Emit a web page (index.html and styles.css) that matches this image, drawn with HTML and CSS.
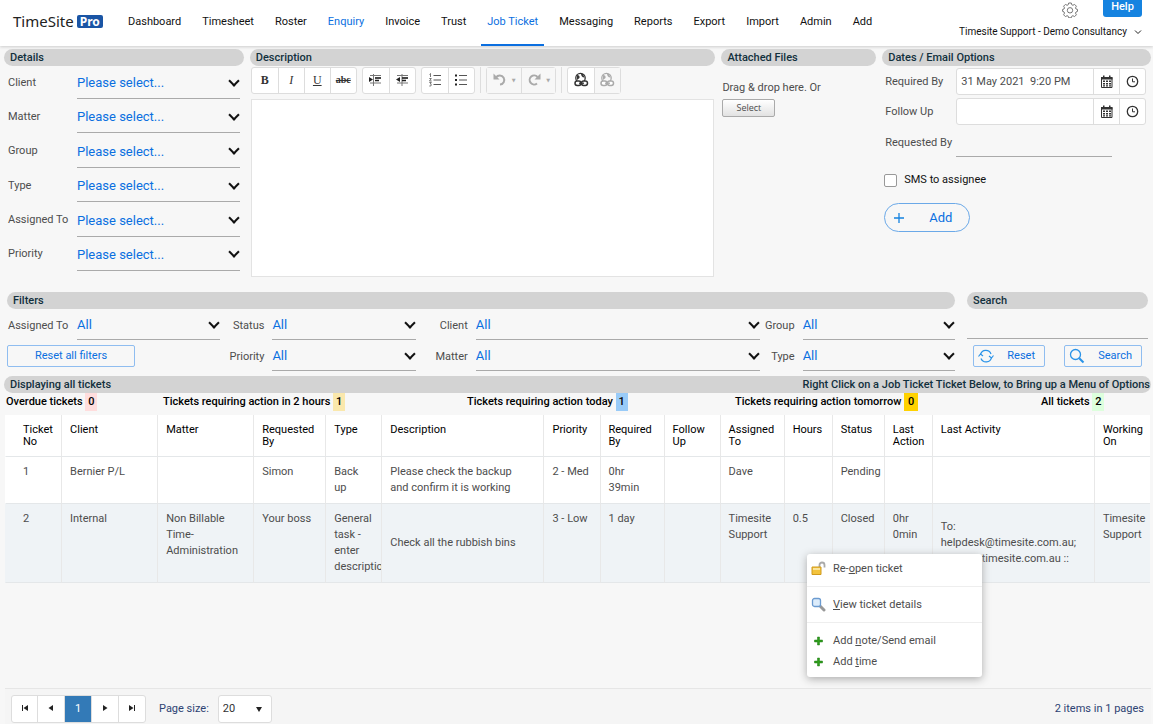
FILE: index.html
```html
<!DOCTYPE html>
<html lang="en">

<head>
    <meta charset="UTF-8">
    <meta name="viewport" content="width=device-width, initial-scale=1.0">
    <link rel="stylesheet" href="styles.css">
    <title>Job Ticket</title>
</head>

<body>

    <svg class="sprite" aria-hidden="true">
        <symbol id="calendar" viewBox="0 0 14 14">
            <path d="M1.500 2.500h10.500v10h-10.500z" fill="#fff" stroke="#333" />
            <path d="M1 2h11.500v2.500H1zM3 .5h1.500V3H3zM9 .5h1.500V3H9z" fill="#333" />
            <path d="M3 5.500h2v1.500H3zM6 5.500h2v1.500H6zM9 5.500h2v1.500H9zM3 8h2v1.500H3zM6 8h2v1.500H6zM9 8h2v1.500H9zM3 10.300h2v1.200H3zM6 10.300h2v1.200H6zM9 10.300h2v1.200H9z" fill="#333" />
        </symbol>
        <symbol id="clock" viewBox="0 0 14 14">
            <circle cx="6.500" cy="6.500" r="5.200" fill="none" stroke="#333" stroke-width="1.300" />
            <path d="M6.500 3.500v3.300H9" fill="none" stroke="#333" />
        </symbol>
        <symbol id="plus" viewBox="0 0 10 10">
            <path d="M4 1h2v3h3v2H6v3H4V6H1V4h3z" fill="#2f9e1c" stroke="#1d7a10" stroke-width=".5" />
        </symbol>
        <symbol id="chain" viewBox="0 0 16 16">
            <circle cx="7.500" cy="6" r="4.700" fill="none" stroke="currentColor" stroke-width="1.300" />
            <path d="M4 3c2 0 3 1 2.500 3L4 8zM8 1.500c0 2 1 4 3.500 4L10 2z" fill="currentColor" />
            <rect x="2" y="9" width="6" height="4.500" rx="2.200" fill="#fff" stroke="currentColor" stroke-width="1.500" />
            <rect x="8.500" y="9" width="6" height="4.500" rx="2.200" fill="#fff" stroke="currentColor" stroke-width="1.500" />
            <path d="M6 11.200h5" stroke="currentColor" stroke-width="1.300" />
        </symbol>
        <symbol id="undo" viewBox="0 0 16 16">
            <path d="M4 5.500A4.500 4.500 0 1 1 8 12.500" fill="none" stroke="currentColor" stroke-width="2" />
            <path d="M1.500 1.500v6h6z" fill="currentColor" />
        </symbol>
        <symbol id="redo" viewBox="0 0 16 16">
            <path d="M11.500 5A4.500 4.500 0 1 0 11 11.500" fill="none" stroke="currentColor" stroke-width="2" />
            <path d="M14.500 1.500v6h-6z" fill="currentColor" />
        </symbol>
    </svg>

    <header class="header">
        <a class="logo" href="#">TimeSite<span class="logo-pro">Pro</span></a>
        <nav class="nav">
            <a class="nav-link" href="#">Dashboard</a>
            <a class="nav-link" href="#">Timesheet</a>
            <a class="nav-link" href="#">Roster</a>
            <a class="nav-link blue" href="#">Enquiry</a>
            <a class="nav-link" href="#">Invoice</a>
            <a class="nav-link" href="#">Trust</a>
            <a class="nav-link blue active" href="#">Job Ticket</a>
            <a class="nav-link" href="#">Messaging</a>
            <a class="nav-link" href="#">Reports</a>
            <a class="nav-link" href="#">Export</a>
            <a class="nav-link" href="#">Import</a>
            <a class="nav-link" href="#">Admin</a>
            <a class="nav-link" href="#">Add</a>
        </nav>
        <div class="account">
            <div class="account-top">
                <button class="gear" aria-label="Settings">
                    <svg width="16" height="16" viewBox="0 0 16 16" fill="none" stroke="#777">
                        <path d="M6.700 1h2.600l.5 1.800 1.100.5 1.700-.9 1.800 1.800-.9 1.700.5 1.100 1.500.4v2l-1.500.6-.5 1.100.9 1.700-1.800 1.800-1.700-.9-1.100.5-.5 1.600H6.700l-.5-1.600-1.100-.5-1.700.9-1.800-1.800.9-1.700L2 9.900.6 9.400v-2L2 7l.5-1.100-.9-1.700 1.800-1.800 1.700.9 1.100-.5z" />
                        <circle cx="8" cy="8.300" r="2.700" />
                    </svg>
                </button>
                <button class="help">Help</button>
            </div>
            <button class="user">Timesite Support - Demo Consultancy
                <svg width="8" height="6" viewBox="0 0 8 6"><path d="M1 1.500l3 3 3-3" fill="none" stroke="#222" /></svg>
            </button>
        </div>
    </header>

    <main class="main">

        <div class="ticket-form">
            <section class="panel">
                <h2 class="bar">Details</h2>
                <div class="details">
                    <label class="detail" for="client">Client
                        <span class="drop"><select id="client"><option>Please select...</option></select></span></label>
                    <label class="detail" for="matter">Matter
                        <span class="drop"><select id="matter"><option>Please select...</option></select></span></label>
                    <label class="detail" for="group">Group
                        <span class="drop"><select id="group"><option>Please select...</option></select></span></label>
                    <label class="detail" for="type">Type
                        <span class="drop"><select id="type"><option>Please select...</option></select></span></label>
                    <label class="detail" for="assigned">Assigned To
                        <span class="drop"><select id="assigned"><option>Please select...</option></select></span></label>
                    <label class="detail" for="priority">Priority
                        <span class="drop"><select id="priority"><option>Please select...</option></select></span></label>
                </div>
            </section>

            <section class="panel">
                <h2 class="bar">Description</h2>
                <div class="toolbar">
                    <div class="tool-group">
                        <button class="tool"><b>B</b></button>
                        <button class="tool"><i>I</i></button>
                        <button class="tool"><u>U</u></button>
                        <button class="tool strike"><s>abc</s></button>
                    </div>
                    <div class="tool-group">
                        <button class="tool" aria-label="Indent">
                            <svg width="13" height="12" viewBox="0 0 13 12"><path d="M1 1.500h11M6 4h6M6 6.500h4M1 9h11M4.500 0v12" stroke="#777" fill="none" /><path d="M0 3l4 2.500L0 8z" fill="#222" /><path d="M6 4h6M6 6.500h4" stroke="#222" stroke-width="1.300" /></svg>
                        </button>
                        <button class="tool" aria-label="Outdent">
                            <svg width="13" height="12" viewBox="0 0 13 12"><path d="M1 1.500h11M6 4h6M6 6.500h4M1 9h11M6 0v12" stroke="#777" fill="none" /><path d="M4 3L0 5.500 4 8z" fill="#222" /><path d="M6 4h6M6 6.500h4" stroke="#222" stroke-width="1.300" /></svg>
                        </button>
                    </div>
                    <div class="tool-group">
                        <button class="tool" aria-label="Numbered list">
                            <svg width="12" height="14" viewBox="0 0 12 14" fill="none" stroke="#555"><path d="M4.500 2.500H12M4.500 7H12M4.500 11.500H12" /><path d="M.5 1.500l1-1v3.500M.3 5.500h2L.5 8h2.200M.3 9.500h2l-1 1.500 1 .5-.5 1.500H.3" stroke-width=".8" /></svg>
                        </button>
                        <button class="tool" aria-label="Bullet list">
                            <svg width="12" height="12" viewBox="0 0 12 12"><path d="M4 1.500h8M4 6h8M4 10.500h8" stroke="#555" /><path d="M0 .5h2v2H0zM0 5h2v2H0zM0 9.500h2v2H0z" fill="#222" /></svg>
                        </button>
                    </div>
                    <span class="tool-divider"></span>
                    <div class="tool-group off">
                        <button class="tool wide" aria-label="Undo" disabled><svg width="16" height="16"><use href="#undo" /></svg><span class="caret">▼</span></button>
                        <button class="tool wide" aria-label="Redo" disabled><svg width="16" height="16"><use href="#redo" /></svg><span class="caret">▼</span></button>
                    </div>
                    <span class="tool-divider"></span>
                    <div class="tool-group">
                        <button class="tool" aria-label="Insert link"><svg width="16" height="16"><use href="#chain" /></svg></button>
                        <button class="tool off" aria-label="Remove link" disabled><svg width="16" height="16"><use href="#chain" /></svg></button>
                    </div>
                </div>
                <textarea class="editor" aria-label="Description"></textarea>
            </section>

            <section class="panel">
                <h2 class="bar">Attached Files</h2>
                <div class="files">
                    <span>Drag &amp; drop here. Or</span>
                    <button class="select-file">Select</button>
                </div>
            </section>

            <section class="panel">
                <h2 class="bar">Dates / Email Options</h2>
                <div class="dates">
                    <label for="required-by">Required By</label>
                    <div class="date-field">
                        <input id="required-by" type="text" value="31 May 2021  9:20 PM">
                        <button aria-label="Pick date"><svg width="14" height="14"><use href="#calendar" /></svg></button>
                        <button aria-label="Pick time"><svg width="14" height="14"><use href="#clock" /></svg></button>
                    </div>
                    <label for="follow-up">Follow Up</label>
                    <div class="date-field">
                        <input id="follow-up" type="text">
                        <button aria-label="Pick date"><svg width="14" height="14"><use href="#calendar" /></svg></button>
                        <button aria-label="Pick time"><svg width="14" height="14"><use href="#clock" /></svg></button>
                    </div>
                    <label for="requested-by">Requested By</label>
                    <input id="requested-by" class="line-input requested" type="text">
                </div>
                <label class="sms"><input type="checkbox">SMS to assignee</label>
                <button class="add-button">
                    <svg width="12" height="12" viewBox="0 0 12 12"><path d="M6 1v10M1 6h10" stroke="#1583e0" stroke-width="1.300" /></svg>
                    Add
                </button>
            </section>
        </div>

        <div class="filter-row">
            <section>
                <h2 class="bar">Filters</h2>
                <div class="filters">
                    <label class="first" for="f-assigned">Assigned To</label>
                    <span class="drop"><select id="f-assigned"><option>All</option></select></span>
                    <label for="f-status">Status</label>
                    <span class="drop"><select id="f-status"><option>All</option></select></span>
                    <label for="f-client">Client</label>
                    <span class="drop"><select id="f-client"><option>All</option></select></span>
                    <label for="f-group">Group</label>
                    <span class="drop"><select id="f-group"><option>All</option></select></span>
                    <div class="reset-cell"><button class="box-button reset-all">Reset all filters</button></div>
                    <label for="f-priority">Priority</label>
                    <span class="drop"><select id="f-priority"><option>All</option></select></span>
                    <label for="f-matter">Matter</label>
                    <span class="drop"><select id="f-matter"><option>All</option></select></span>
                    <label for="f-type">Type</label>
                    <span class="drop"><select id="f-type"><option>All</option></select></span>
                </div>
            </section>
            <section>
                <h2 class="bar">Search</h2>
                <div class="search">
                    <input class="line-input" type="text" aria-label="Search">
                    <div class="search-buttons">
                        <button class="box-button">
                            <svg width="16" height="14" viewBox="0 0 16 14" fill="none" stroke="#2a93e8" stroke-width="1.200"><path d="M2.500 5.500A5.500 5.500 0 0 1 13 5M13.500 8.500A5.500 5.500 0 0 1 3 9.500" /><path d="M.5 7.500l2-2.500 2.500 2M11 7l2.500 2 2-2.500" /></svg>
                            Reset
                        </button>
                        <button class="box-button">
                            <svg width="16" height="16" viewBox="0 0 16 16" fill="none" stroke="#2a93e8"><circle cx="6.500" cy="6.500" r="5" stroke-width="1.300" /><path d="M10.200 10.200l4.300 4.300" stroke-width="2" /></svg>
                            Search
                        </button>
                    </div>
                </div>
            </section>
        </div>

        <div class="bar status-bar">
            <span>Displaying all tickets</span>
            <span>Right Click on a Job Ticket Ticket Below, to Bring up a Menu of Options</span>
        </div>

        <div class="counts">
            <div>Overdue tickets <span class="count pink">0</span></div>
            <div>Tickets requiring action in 2 hours <span class="count yellow">1</span></div>
            <div>Tickets requiring action today <span class="count sky">1</span></div>
            <div>Tickets requiring action tomorrow <span class="count gold">0</span></div>
            <div>All tickets <span class="count green">2</span></div>
        </div>

        <div class="tickets-wrap">
            <table class="tickets">
                <colgroup>
                    <col class="w56"><col class="w96"><col class="w96"><col class="w72"><col class="w56">
                    <col class="w162"><col class="w56"><col class="w64"><col class="w56"><col class="w64">
                    <col class="w48"><col class="w52"><col class="w48"><col class="w162"><col class="w56">
                </colgroup>
                <thead>
                    <tr>
                        <th>Ticket No</th>
                        <th>Client</th>
                        <th>Matter</th>
                        <th>Requested By</th>
                        <th>Type</th>
                        <th>Description</th>
                        <th>Priority</th>
                        <th>Required By</th>
                        <th>Follow Up</th>
                        <th>Assigned To</th>
                        <th>Hours</th>
                        <th>Status</th>
                        <th>Last Action</th>
                        <th>Last Activity</th>
                        <th>Working On</th>
                    </tr>
                </thead>
                <tbody>
                    <tr>
                        <td>1</td>
                        <td>Bernier P/L</td>
                        <td></td>
                        <td>Simon</td>
                        <td>Back up</td>
                        <td>Please check the backup and confirm it is working</td>
                        <td class="nowrap">2 - Med</td>
                        <td>0hr 39min</td>
                        <td></td>
                        <td>Dave</td>
                        <td></td>
                        <td>Pending</td>
                        <td></td>
                        <td></td>
                        <td></td>
                    </tr>
                    <tr class="alt">
                        <td>2</td>
                        <td>Internal</td>
                        <td>Non Billable Time- Administration</td>
                        <td>Your boss</td>
                        <td>General task - enter description</td>
                        <td class="middle">Check all the rubbish bins</td>
                        <td class="nowrap">3 - Low</td>
                        <td>1 day</td>
                        <td></td>
                        <td>Timesite Support</td>
                        <td>0.5</td>
                        <td>Closed</td>
                        <td>0hr 0min</td>
                        <td class="middle">To: helpdesk@timesite.com.au; <span class="mail-end">timesite.com.au ::</span></td>
                        <td>Timesite Support</td>
                    </tr>
                </tbody>
            </table>

            <div class="menu" role="menu">
                <button class="menu-item" role="menuitem">
                    <svg width="15" height="15" viewBox="0 0 15 15"><path d="M8.500 6V4a2.500 2.500 0 0 1 5 0v2.500" fill="none" stroke="#aaa" stroke-width="1.800" /><path d="M1 6h9v7.500H1z" fill="#f3c33c" stroke="#d09a1c" /><path d="M2 7h7v2H2z" fill="#fbe49a" /></svg>
                    <span>Re-<u>o</u>pen ticket</span>
                </button>
                <button class="menu-item ruled" role="menuitem">
                    <svg width="15" height="15" viewBox="0 0 15 15"><path d="M9 9l4 4" stroke="#999" stroke-width="3" stroke-linecap="round" /><rect x="1.500" y="1.500" width="8" height="8" rx="2" fill="#dcecfb" stroke="#6b9bd0" stroke-width="1.300" /></svg>
                    <span><u>V</u>iew ticket details</span>
                </button>
                <button class="menu-item" role="menuitem">
                    <svg width="15" height="10"><use href="#plus" /></svg>
                    <span>Add <u>n</u>ote/Send email</span>
                </button>
                <button class="menu-item" role="menuitem">
                    <svg width="15" height="10"><use href="#plus" /></svg>
                    <span>Add <u>t</u>ime</span>
                </button>
            </div>
        </div>
    </main>

    <footer class="pager">
        <div class="pages">
            <button aria-label="First page"><svg width="8" height="8" viewBox="0 0 8 8"><path d="M1 1h1v6H1zM7 1v6L2.500 4z" fill="#222" /></svg></button>
            <button aria-label="Previous page"><svg width="8" height="8" viewBox="0 0 8 8"><path d="M6 1v6L1.500 4z" fill="#222" /></svg></button>
            <button class="current">1</button>
            <button aria-label="Next page"><svg width="8" height="8" viewBox="0 0 8 8"><path d="M2 1v6l4.500-3z" fill="#222" /></svg></button>
            <button aria-label="Last page"><svg width="8" height="8" viewBox="0 0 8 8"><path d="M6 1h1v6H6zM1 1v6l4.500-3z" fill="#222" /></svg></button>
        </div>
        <label for="page-size">Page size:</label>
        <span class="page-size"><select id="page-size"><option>20</option></select></span>
        <span class="pager-info">2 items in 1 pages</span>
    </footer>

</body>

</html>
```

FILE: styles.css
```css
*,
*::after {
    box-sizing: border-box;
}

body {
    margin: 0;
    min-height: 100vh;
    display: flex;
    flex-direction: column;
    background-color: #f7f7f7;
    font-family: Roboto, "Liberation Sans", sans-serif;
    font-size: 11px;
    line-height: 16px;
    color: #4d4d4d;
}

button,
input,
select,
textarea {
    font: inherit;
    color: inherit;
    margin: 0;
    padding: 0;
    border: none;
    border-radius: 0;
    background: none;
}

button {
    cursor: pointer;
}

a {
    color: inherit;
    text-decoration: none;
}

.sprite {
    display: none;
}

/* header */

.header {
    display: flex;
    height: 46px;
    background-color: #fff;
    box-shadow: 0 1px 3px #ccc;
}

.logo {
    display: flex;
    align-items: center;
    gap: 3px;
    width: 122px;
    padding-left: 13px;
    padding-bottom: 4px;
    font-family: "Noto Sans", sans-serif;
    font-size: 15px;
    color: #222;
}

.logo-pro {
    padding: 0 3px;
    border-radius: 2px;
    background-color: #1a55a5;
    color: #fff;
    font-size: 12px;
    font-weight: bold;
    line-height: 13px;
}

.nav {
    display: flex;
    gap: 9px;
}

.nav-link {
    padding: 14px 6px 0;
    border-bottom: 2px solid transparent;
    color: #111;
}

.blue {
    color: #0b6fe0;
}

.active {
    border-bottom-color: #0b6fe0;
}

.account {
    margin-left: auto;
    padding-right: 11px;
    display: flex;
    flex-direction: column;
    align-items: flex-end;
}

.account-top {
    display: flex;
    gap: 25px;
    align-items: flex-start;
}

.gear {
    height: 18px;
    padding-top: 1px;
}

.gear svg,
.tool svg,
.date-field svg,
.menu-item svg {
    display: block;
}

.help {
    width: 39px;
    height: 17px;
    padding-bottom: 3px;
    border-radius: 0 0 3px 3px;
    background-color: #1583e0;
    color: #fff;
    font-size: 11px;
    font-weight: 500;
    line-height: 14px;
}

.user {
    display: flex;
    align-items: center;
    gap: 7px;
    margin-top: 6px;
    font-size: 10px;
    color: #111;
}

.main {
    padding: 3px 2px 0 4px;
}

.bar {
    margin: 0;
    padding: 0 6px;
    height: 17px;
    border-radius: 9px;
    background-color: #d3d3d3;
    font-size: 11px;
    font-weight: 500;
    line-height: 17px;
    color: #12303d;
}

/* new ticket form */

.ticket-form {
    display: grid;
    grid-template-columns: 240fr 466fr 155fr 269fr;
    gap: 6px;
}

.panel {
    display: flex;
    flex-direction: column;
    min-width: 0;
}

.details {
    flex: 1;
    display: flex;
    flex-direction: column;
    justify-content: space-between;
    padding: 0 4px 6px 4px;
}

.detail {
    display: grid;
    grid-template-columns: 69px 1fr;
    align-items: center;
    line-height: 18px;
}

.drop {
    display: grid;
    height: 33px;
    align-items: center;
    border-bottom: 1px solid #aaa;
    min-width: 0;
}

.drop select {
    grid-area: 1 / 1;
    width: 100%;
    height: 100%;
    padding-top: 2px;
    appearance: none;
    font-size: 13px;
    color: #0b6fe0;
}

.drop::after {
    content: "";
    grid-area: 1 / 1;
    justify-self: end;
    width: 8px;
    height: 8px;
    margin: 0 2px 3px 0;
    border: solid #111;
    border-width: 0 2px 2px 0;
    transform: rotate(45deg);
    pointer-events: none;
}

.toolbar {
    display: flex;
    align-items: center;
    gap: 5px;
    padding: 0 1px;
    height: 28px;
}

.tool-group {
    display: flex;
    border: 1px solid #ddd;
    border-radius: 3px;
    background-color: #fff;
}

.tool {
    display: flex;
    align-items: center;
    justify-content: center;
    width: 26px;
    height: 25px;
    font-family: "Liberation Serif", serif;
    font-size: 12px;
    color: #333;
}

.tool + .tool {
    border-left: 1px solid #ddd;
}

.tool.strike {
    font-size: 10px;
    font-weight: bold;
}

.tool.wide {
    width: 34px;
    gap: 4px;
}

.off,
.off .tool {
    background-color: #f7f7f7;
    color: #aaa;
}

.caret {
    font-family: "DejaVu Sans", sans-serif;
    font-size: 5px;
}

.tool-divider {
    width: 1px;
    height: 26px;
    background-color: #ddd;
}

.editor {
    height: 178px;
    margin: 5px 1px 0;
    padding: 8px;
    border: 1px solid #e3e3e3;
    background-color: #fff;
    resize: none;
}

.files {
    display: flex;
    flex-direction: column;
    align-items: flex-start;
    gap: 3px;
    padding: 14px 1px;
}

.select-file {
    width: 53px;
    height: 18px;
    border: 1px solid #aaa;
    border-radius: 2px;
    background-image: linear-gradient(#fff, #e2e2e2);
    font-family: "Open Sans", sans-serif;
    font-size: 9px;
    line-height: 14px;
}

.dates {
    display: grid;
    grid-template-columns: 71px minmax(0, 1fr);
    align-items: center;
    row-gap: 3px;
    padding: 2px 5px 0 3px;
}

.date-field {
    display: flex;
    height: 27px;
    border: 1px solid #ddd;
    border-radius: 3px;
    background-color: #fff;
}

.date-field input {
    flex: 1;
    min-width: 0;
    padding-left: 4px;
}

.date-field button {
    display: grid;
    place-items: center;
    width: 26px;
    border-left: 1px solid #ddd;
}

.line-input {
    display: block;
    width: 100%;
    height: 30px;
    border-bottom: 1px solid #aaa;
}

.requested {
    width: 156px;
    height: 29px;
}

.sms {
    display: flex;
    align-items: center;
    gap: 7px;
    padding: 15px 2px 14px;
    color: #111;
}

.sms input {
    appearance: none;
    width: 13px;
    height: 13px;
    border: 1px solid #999;
    border-radius: 2px;
    background-color: #fff;
}

.add-button {
    display: flex;
    align-items: center;
    gap: 24px;
    width: 86px;
    height: 29px;
    margin: 1px 2px;
    padding-left: 8px;
    border: 1px solid #6ba9e8;
    border-radius: 15px;
    font-size: 13px;
    color: #0b6fe0;
}

/* filters */

.filter-row {
    display: grid;
    grid-template-columns: 948fr 181fr;
    gap: 12px;
    margin-top: 15px;
    padding: 0 3px;
}

.filters {
    display: grid;
    grid-template-columns: 70px 144fr 52px 144fr 60px 285fr 43px 153fr;
    grid-auto-rows: 31px;
    align-items: center;
}

.filters label {
    padding: 2px 8px 0 0;
    text-align: right;
    white-space: nowrap;
}

.filters .first {
    padding: 2px 0 0 1px;
    text-align: left;
}

.filters .drop {
    height: 31px;
}

.reset-cell {
    grid-column: span 2;
}

.box-button {
    display: flex;
    align-items: center;
    justify-content: space-between;
    height: 22px;
    padding: 0 9px 0 4px;
    border: 1px solid #8fbdf0;
    border-radius: 2px;
    color: #0b6fe0;
}

.reset-all {
    width: 128px;
    justify-content: center;
    padding: 0;
}

.search-buttons {
    display: flex;
    justify-content: space-between;
    padding: 6px 6px 0;
}

.search-buttons .box-button {
    width: 78px;
}

.search-buttons .box-button:first-child {
    width: 72px;
}

.status-bar {
    display: flex;
    justify-content: space-between;
    margin-top: 5px;
    padding-right: 1px;
}

.counts {
    display: grid;
    grid-template-columns: 157fr 304fr 268fr 306fr 110fr;
    padding-left: 2px;
    font-weight: 500;
    line-height: 18px;
    color: #000;
}

.count {
    display: inline-block;
    width: 12px;
    text-align: center;
}

.pink {
    background-color: #fdd;
}

.yellow {
    background-color: #fae8ac;
}

.sky {
    background-color: #99cbf8;
}

.gold {
    width: 14px;
    background-color: #ffd200;
}

.green {
    background-color: #dfd;
}

/* ticket table */

.tickets-wrap {
    position: relative;
    margin: 4px 1px 0 1px;
}

.tickets {
    width: 100%;
    table-layout: fixed;
    border-collapse: separate;
    border-spacing: 0;
    background-color: #fff;
}

.w48 { width: 48px; }
.w52 { width: 52px; }
.w56 { width: 56px; }
.w64 { width: 64px; }
.w72 { width: 72px; }
.w96 { width: 96px; }
.w162 { width: 162px; }

.tickets th,
.tickets td {
    padding: 7px 11px 7px 8px;
    border-left: 1px solid #e8e8e8;
    border-bottom: 1px solid #e4e7e9;
    text-align: left;
    vertical-align: top;
    overflow: hidden;
}

.tickets th {
    padding: 9px 8px 8px 8px;
    font-weight: 400;
    line-height: 12px;
    color: #000;
}

.tickets th:first-child,
.tickets td:first-child {
    padding-left: 17px;
    border-left-color: transparent;
}

.alt {
    background-color: #eff3f6;
}

.tickets .middle {
    vertical-align: middle;
}

.nowrap {
    white-space: nowrap;
}

.mail-end {
    padding-left: 41px;
    white-space: nowrap;
}

/* right click menu of the second ticket */

.menu {
    position: absolute;
    top: 139px;
    right: 168px;
    width: 175px;
    padding: 4px 0 5px;
    border-radius: 3px;
    background-color: #fff;
    box-shadow: 0 2px 8px #aaa;
}

.menu-item {
    display: flex;
    align-items: center;
    gap: 7px;
    width: 100%;
    height: 21px;
    padding-left: 4px;
}

.ruled {
    height: 37px;
    margin: 7px 0;
    border: solid #eee;
    border-width: 1px 0;
}

/* pager */

.pager {
    display: flex;
    align-items: center;
    margin: auto 2px 0 5px;
    padding: 6px 7px 1px 6px;
    border-top: 1px solid #e6e6e6;
    background-color: #f5f5f5;
    color: #2d4373;
}

.pages {
    display: flex;
    margin-right: 13px;
    border: 1px solid #ddd;
    border-radius: 3px;
    background-color: #fff;
}

.pages button {
    width: 27px;
    height: 26px;
    border-right: 1px solid #ddd;
}

.pages button:first-child,
.pages button:last-child {
    width: 26px;
}

.pages button:last-child {
    border-right: none;
}

.pages .current {
    background-color: #337ab7;
    color: #fff;
}

.page-size {
    display: grid;
    align-items: center;
    width: 54px;
    height: 28px;
    margin-left: 9px;
    border: 1px solid #ddd;
    border-radius: 3px;
    background-color: #fff;
    color: #333;
}

.page-size select {
    grid-area: 1 / 1;
    width: 100%;
    padding-left: 4px;
    appearance: none;
}

.page-size::after {
    content: "";
    grid-area: 1 / 1;
    justify-self: end;
    margin-right: 9px;
    border: solid transparent;
    border-width: 5px 3px 0;
    border-top-color: #222;
    pointer-events: none;
}

.pager-info {
    margin-left: auto;
}
```
